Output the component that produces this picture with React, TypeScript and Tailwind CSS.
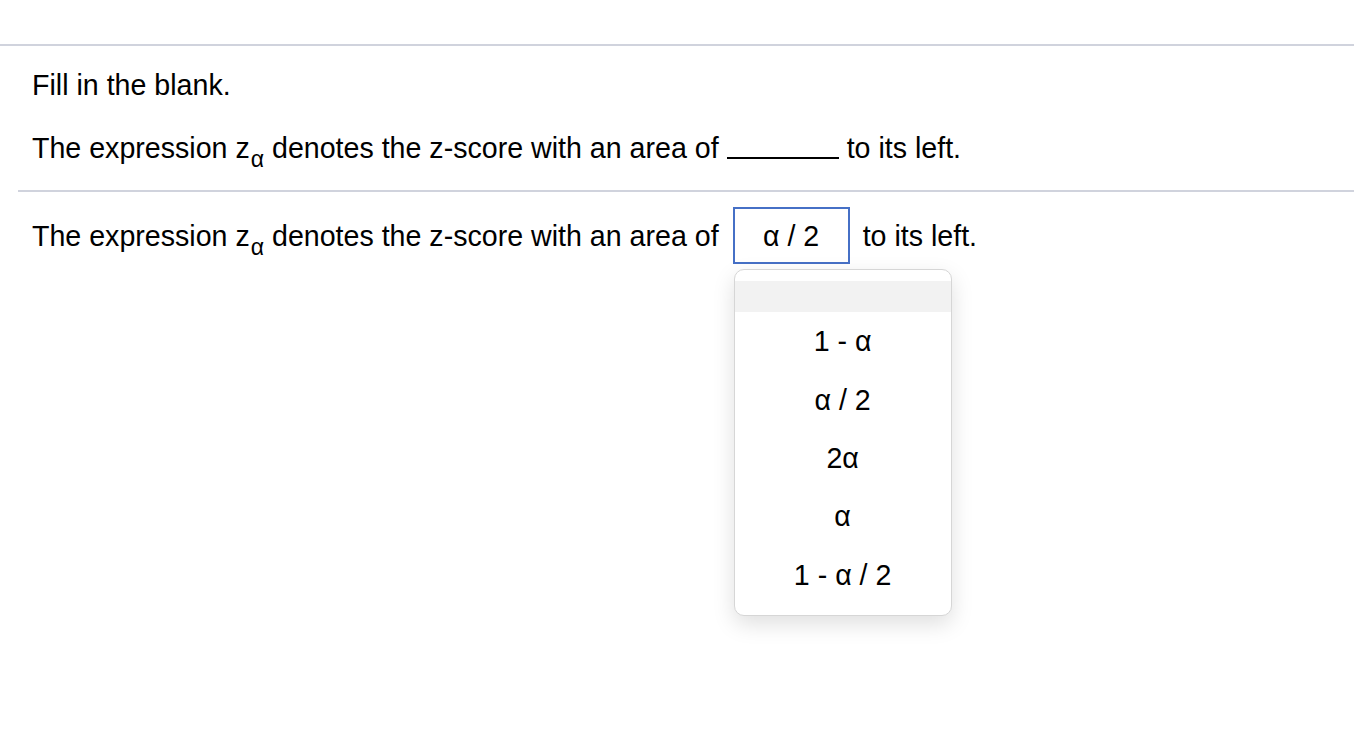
import React from "react"

const options = ["1 - α", "α / 2", "2α", "α", "1 - α / 2"]

function ZAlpha() {
    return (
        <>
            z<span className="relative top-[9px] ml-[1px] text-[23px] leading-none">α</span>
        </>
    )
}

export default function App() {
    return (
        <div className="min-h-screen bg-white text-[28.6px] leading-[32px] text-black font-['Liberation_Sans',Arial,sans-serif]">
            <div className="h-[44px]" />
            <div className="border-t-2 border-[#d0d3dd]">
                {/* Question */}
                <div className="px-8 pt-[23px]">
                    <p>Fill in the blank.</p>
                    <p className="mt-[31px] flex items-end">
                        <span className="whitespace-pre">
                            The expression <ZAlpha /> denotes the z-score with an area of
                        </span>
                        <span className="ml-[8px] mb-[5px] w-[112px] border-b-2 border-black" />
                        <span className="ml-[8px]">to its left.</span>
                    </p>
                </div>

                {/* Answer */}
                <div className="ml-[18px] mt-[26px] border-t-2 border-[#d0d3dd]">
                    <div className="flex items-center pl-[14px] pt-[15px]">
                        <span className="whitespace-pre">
                            The expression <ZAlpha /> denotes the z-score with an area of
                        </span>
                        <div className="relative ml-[14px]">
                            <div className="flex h-[57px] w-[117px] items-center justify-center border-2 border-[#4670c6]">
                                α / 2
                            </div>
                            <div className="absolute left-[1px] top-[62px] w-[218px] rounded-[10px] border border-[#d6d6d6] bg-white pt-[11px] pb-[11px] shadow-[0_8px_22px_rgba(0,0,0,0.13)]">
                                <div className="h-[31px] bg-[#f2f2f2]" />
                                {options.map((o) => (
                                    <div key={o} className="flex h-[58.4px] items-center justify-center">
                                        {o}
                                    </div>
                                ))}
                            </div>
                        </div>
                        <span className="ml-[13px]">to its left.</span>
                    </div>
                </div>
            </div>
        </div>
    )
}
